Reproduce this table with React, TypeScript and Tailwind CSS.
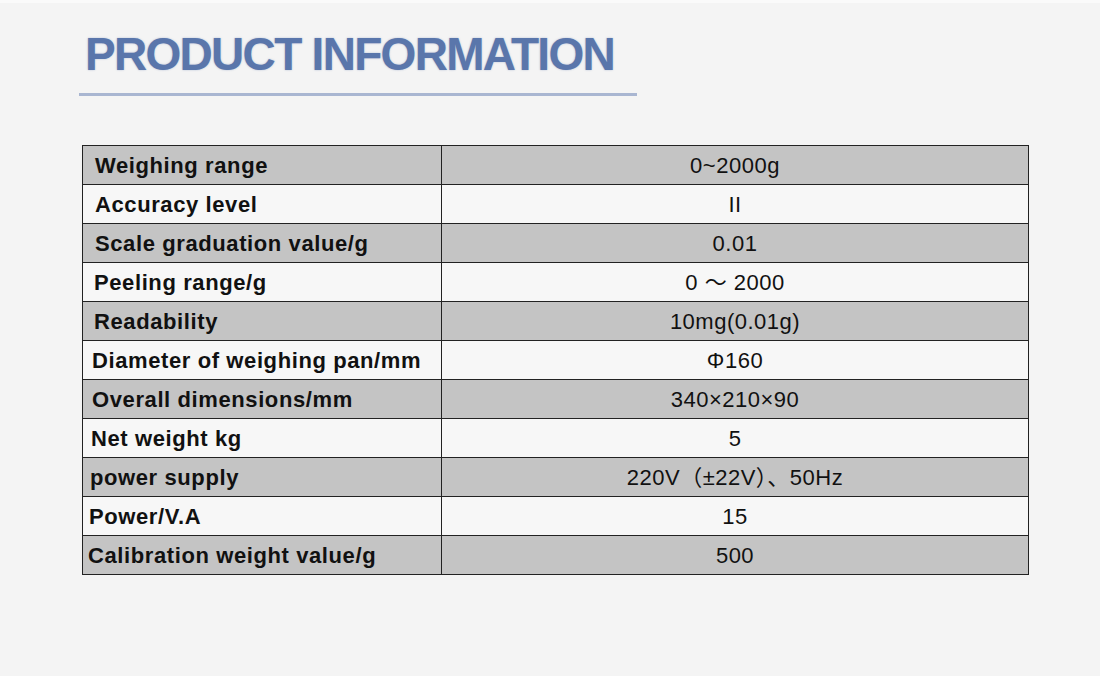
const rows: { label: string; value: string; pad: string }[] = [
  { label: "Weighing range", value: "0~2000g", pad: "pl-[12px]" },
  { label: "Accuracy level", value: "II", pad: "pl-[12px]" },
  { label: "Scale graduation value/g", value: "0.01", pad: "pl-[12px]" },
  { label: "Peeling range/g", value: "0 ～ 2000", pad: "pl-[11px]" },
  { label: "Readability", value: "10mg(0.01g)", pad: "pl-[11px]" },
  { label: "Diameter of weighing pan/mm", value: "Φ160", pad: "pl-[9px]" },
  { label: "Overall dimensions/mm", value: "340×210×90", pad: "pl-[9px]" },
  { label: "Net weight kg", value: "5", pad: "pl-[8px]" },
  { label: "power supply", value: "220V（±22V）、50Hz", pad: "pl-[7px]" },
  { label: "Power/V.A", value: "15", pad: "pl-[6px]" },
  { label: "Calibration weight value/g", value: "500", pad: "pl-[5px]" },
];

export default function App() {
  return (
    <div className="min-h-[676px] w-full bg-[#f4f4f4] font-['Liberation_Sans',Arial,'Noto_Sans_CJK_SC',sans-serif] text-[#111]">
      <div className="h-[3px] bg-[#fafafa]" />
      {/* heading */}
      <div className="pt-[28px] pl-[85px]">
        <h1 className="text-[46px] leading-[46px] font-bold tracking-[-1.7px] text-[#5a76ab] [text-shadow:0_0_2px_rgba(90,118,171,0.45)]">
          PRODUCT INFORMATION
        </h1>
      </div>
      <div className="ml-[79px] mt-[16px] h-[3px] w-[558px] bg-[#a9b6d1]" />

      {/* spec table */}
      <table className="ml-[82px] mt-[49px] w-[947px] table-fixed border-collapse border border-[#222]">
        <colgroup>
          <col className="w-[359px]" />
          <col />
        </colgroup>
        <tbody>
          {rows.map((r, i) => (
            <tr key={r.label} className={i % 2 === 0 ? "bg-[#c4c4c4]" : "bg-[#f7f7f7]"}>
              <td
                className={`h-[39px] border border-[#222] ${r.pad} pt-[2px] text-[22px] font-bold tracking-[0.6px] leading-none whitespace-nowrap`}
              >
                {r.label}
              </td>
              <td className="h-[39px] border border-[#222] pt-[1px] text-center text-[22px] tracking-[0.5px] leading-none">
                {r.value}
              </td>
            </tr>
          ))}
        </tbody>
      </table>
    </div>
  );
}
